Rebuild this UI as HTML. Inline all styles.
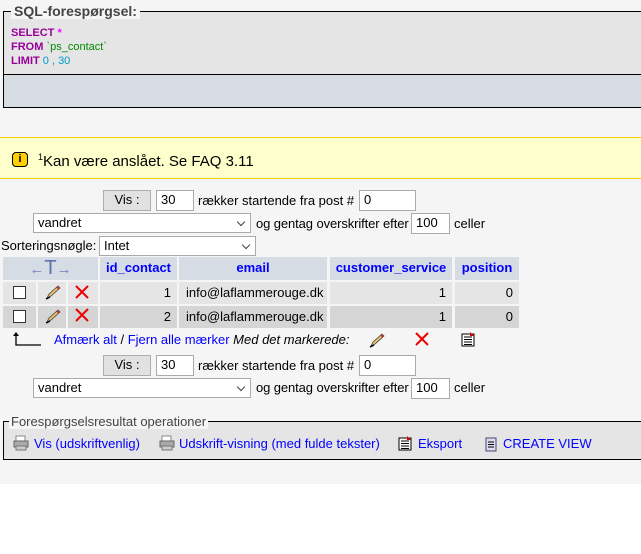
<!DOCTYPE html>
<html><head><meta charset="utf-8"><style>
body{margin:0;width:641px;height:554px;background:#fff;font-family:"Liberation Sans",Arial,sans-serif;font-size:13px;position:relative;overflow:hidden}
.bg{position:absolute;left:0;top:0;width:641px;height:484px;background:#f5f5f5}
.a{position:absolute;white-space:nowrap}
.inp{position:absolute;background:#fff;border:1px solid #aaa;box-sizing:border-box;font-size:13px;padding:2px 4px;line-height:14px}
.sel{position:absolute;background:#fff;border:1px solid #aaa;box-sizing:border-box;font-size:13px;padding:2px 4px;line-height:14px}
.sel:after{content:"";position:absolute;right:6px;top:5px;width:5px;height:5px;border-right:1.5px solid #444;border-bottom:1.5px solid #444;transform:rotate(45deg)}
.btn{position:absolute;background:#e1e1e1;border:1px solid #adadad;box-sizing:border-box;text-align:center;font-size:13px;line-height:18px}
.c{position:absolute;box-sizing:border-box}
.h{background:#d5dce3;color:#00f;font-weight:bold;text-align:center;line-height:22px}
.r1{background:#e5e5e5}.r2{background:#d5d5d5}
.num{text-align:right;padding-right:6px;line-height:21px}
.cb{position:absolute;width:13px;height:13px;border:1px solid #333;background:#fff;box-sizing:border-box}
.lnk{color:#00f}
</style></head><body>
<div class="bg"></div>
<div class="c" style="left:3px;top:11px;width:650px;height:97px;border:1px solid #000;background:#e5e5e5"></div>
<div class="c" style="left:4px;top:74px;width:650px;height:33px;border-top:1px solid #000;background:#d7dce3"></div>
<div class="a" style="left:11px;top:3px;background:#f5f5f5;padding:0 3px;font-weight:bold;color:#444;font-size:14px">SQL-forespørgsel:</div>
<div class="a" style="left:11px;top:26px;font-size:11px;line-height:14px;font-weight:bold">
<span style="color:#909">SELECT</span> <span style="color:#f0f">*</span><br>
<span style="color:#909">FROM</span> <span style="color:#080;font-weight:normal">`ps_contact`</span><br>
<span style="color:#909">LIMIT</span> <span style="color:#09c;font-weight:normal">0 , 30</span></div>
<div class="c" style="left:0;top:137px;width:641px;height:42px;background:#ffffcc;border-top:1px solid #f0d000;border-bottom:1px solid #f0d000"></div>
<div class="c" style="left:12px;top:152px;width:16px;height:15px;background:#ffd000;border:1.5px solid #000;border-radius:4px;text-align:center;font:bold 11px/12px 'Liberation Sans';">i</div>
<div class="a" style="left:38px;top:152px;font-size:15px"><sup style="font-size:9px">1</sup>Kan være anslået. Se FAQ 3.11</div>
<div class="btn" style="left:103px;top:190px;width:48px;height:21px">Vis :</div>
<div class="inp" style="left:156px;top:190px;width:38px;height:21px">30</div>
<div class="a" style="left:198px;top:193px">rækker startende fra post #</div>
<div class="inp" style="left:359px;top:190px;width:57px;height:21px">0</div>
<div class="sel" style="left:33px;top:213px;width:218px;height:20px">vandret</div>
<div class="a" style="left:256px;top:216px;letter-spacing:-0.1px">og gentag overskrifter efter</div>
<div class="inp" style="left:411px;top:213px;width:39px;height:21px">100</div>
<div class="a" style="left:454px;top:216px">celler</div>
<div class="a" style="left:1px;top:238px">Sorteringsnøgle:</div>
<div class="sel" style="left:99px;top:236px;width:157px;height:20px">Intet</div>
<div class="c h" style="left:3px;top:257px;width:95px;height:23px;color:#7080c0;font-weight:normal;font-size:15px">←<span style="font-size:20px;color:#6070b0">T</span>→</div>
<div class="c h" style="left:100px;top:257px;width:77px;height:23px">id_contact</div>
<div class="c h" style="left:179px;top:257px;width:148px;height:23px">email</div>
<div class="c h" style="left:330px;top:257px;width:122px;height:23px">customer_service</div>
<div class="c h" style="left:455px;top:257px;width:64px;height:23px">position</div>

<div class="c r1" style="left:3px;top:282px;width:33px;height:22px"></div>
<div class="c r1" style="left:38px;top:282px;width:28px;height:22px"></div>
<div class="c r1" style="left:68px;top:282px;width:30px;height:22px"></div>
<div class="c r1 num" style="left:100px;top:282px;width:77px;height:22px">1</div>
<div class="c r1" style="left:179px;top:282px;width:148px;height:22px;line-height:21px;padding-left:7px">info@laflammerouge.dk</div>
<div class="c r1 num" style="left:330px;top:282px;width:122px;height:22px">1</div>
<div class="c r1 num" style="left:455px;top:282px;width:64px;height:22px">0</div>

<div class="c r2" style="left:3px;top:306px;width:33px;height:22px"></div>
<div class="c r2" style="left:38px;top:306px;width:28px;height:22px"></div>
<div class="c r2" style="left:68px;top:306px;width:30px;height:22px"></div>
<div class="c r2 num" style="left:100px;top:306px;width:77px;height:22px">2</div>
<div class="c r2" style="left:179px;top:306px;width:148px;height:22px;line-height:21px;padding-left:7px">info@laflammerouge.dk</div>
<div class="c r2 num" style="left:330px;top:306px;width:122px;height:22px">1</div>
<div class="c r2 num" style="left:455px;top:306px;width:64px;height:22px">0</div>

<div class="cb" style="left:13px;top:286px"></div>
<div class="cb" style="left:13px;top:310px"></div>
<svg class="a" style="left:44px;top:284px" width="18" height="16"><path d="M3 14 L5 10 L14 2 L16 4 L7 12 Z" fill="#e8c070" stroke="#444" stroke-width=".8"/><path d="M13 3 L15 5" stroke="#c33" stroke-width="2"/><path d="M2 15 L6 13" stroke="#000" stroke-width="1.5"/></svg>
<svg class="a" style="left:44px;top:308px" width="18" height="16"><path d="M3 14 L5 10 L14 2 L16 4 L7 12 Z" fill="#e8c070" stroke="#444" stroke-width=".8"/><path d="M13 3 L15 5" stroke="#c33" stroke-width="2"/><path d="M2 15 L6 13" stroke="#000" stroke-width="1.5"/></svg>
<svg class="a" style="left:75px;top:285px" width="14" height="14"><path d="M1 1 L13 13 M13 1 L1 13" stroke="#e00" stroke-width="2"/></svg>
<svg class="a" style="left:75px;top:308px" width="14" height="14"><path d="M1 1 L13 13 M13 1 L1 13" stroke="#e00" stroke-width="2"/></svg>

<svg class="a" style="left:12px;top:331px" width="30" height="16"><path d="M4 3 V14 H29" fill="none" stroke="#000" stroke-width="1.3"/><path d="M1 5 L4 1 L7 5Z" fill="#000"/></svg>
<div class="a" style="left:54px;top:332px"><span class="lnk">Afmærk alt</span> / <span class="lnk">Fjern alle mærker</span> <i>Med det markerede:</i></div>
<svg class="a" style="left:368px;top:332px" width="18" height="16"><path d="M3 14 L5 10 L14 2 L16 4 L7 12 Z" fill="#e8c070" stroke="#444" stroke-width=".8"/><path d="M13 3 L15 5" stroke="#c33" stroke-width="2"/><path d="M2 15 L6 13" stroke="#000" stroke-width="1.5"/></svg>
<svg class="a" style="left:415px;top:332px" width="14" height="14"><path d="M1 1 L13 13 M13 1 L1 13" stroke="#e00" stroke-width="2"/></svg>
<svg class="a" style="left:461px;top:332px" width="15" height="15"><rect x="1" y="2" width="12" height="12" fill="#fff" stroke="#000"/><path d="M3 5H11M3 7.5H11M3 10H11M3 12.5H11" stroke="#000"/><path d="M9 0 L13 4 H9Z" fill="#d00"/></svg>
<div class="btn" style="left:103px;top:355px;width:48px;height:21px">Vis :</div>
<div class="inp" style="left:156px;top:355px;width:38px;height:21px">30</div>
<div class="a" style="left:198px;top:358px">rækker startende fra post #</div>
<div class="inp" style="left:359px;top:355px;width:57px;height:21px">0</div>
<div class="sel" style="left:33px;top:378px;width:218px;height:20px">vandret</div>
<div class="a" style="left:256px;top:380px;letter-spacing:-0.1px">og gentag overskrifter efter</div>
<div class="inp" style="left:411px;top:378px;width:39px;height:21px">100</div>
<div class="a" style="left:454px;top:380px">celler</div>
<div class="c" style="left:3px;top:421px;width:650px;height:39px;border:1px solid #000;background:#e5e5e5"></div>
<div class="a" style="left:9px;top:414px;background:#f5f5f5;padding:0 2px;color:#444">Forespørgselsresultat operationer</div>
<svg class="a" style="left:13px;top:435px" width="16" height="16"><rect x="3" y="1" width="9" height="6" fill="#fff" stroke="#888"/><rect x="1" y="6" width="14" height="6" fill="#aaa" stroke="#666"/><rect x="3" y="11" width="10" height="4" fill="#ccc" stroke="#777"/></svg>
<div class="a lnk" style="left:34px;top:436px">Vis (udskriftvenlig)</div>
<svg class="a" style="left:159px;top:435px" width="16" height="16"><rect x="3" y="1" width="9" height="6" fill="#fff" stroke="#888"/><rect x="1" y="6" width="14" height="6" fill="#aaa" stroke="#666"/><rect x="3" y="11" width="10" height="4" fill="#ccc" stroke="#777"/></svg>
<div class="a lnk" style="left:179px;top:436px">Udskrift-visning (med fulde tekster)</div>
<svg class="a" style="left:398px;top:436px" width="15" height="15"><rect x="1" y="2" width="12" height="12" fill="#fff" stroke="#000"/><path d="M3 5H11M3 7.5H11M3 10H11M3 12.5H11" stroke="#000"/><path d="M9 0 L13 4 H9Z" fill="#d00"/></svg>
<div class="a lnk" style="left:418px;top:436px">Eksport</div>
<svg class="a" style="left:485px;top:437px" width="13" height="15"><rect x="1" y="1" width="10" height="13" fill="#dde" stroke="#447"/><path d="M3 5H9M3 7.5H9M3 10H9" stroke="#000"/></svg>
<div class="a lnk" style="left:503px;top:436px">CREATE VIEW</div>
</body></html>
